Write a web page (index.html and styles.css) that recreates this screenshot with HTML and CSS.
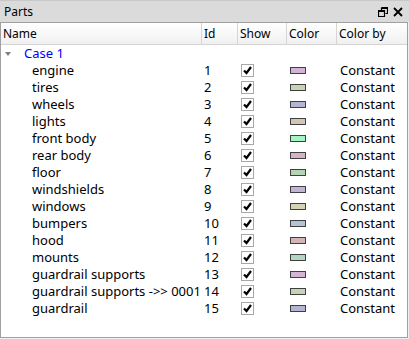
FILE: index.html
```html
<!DOCTYPE html>
<html lang="en">
<head>
    <meta charset="UTF-8">
    <title>Parts</title>
    <link rel="stylesheet" href="styles.css">
</head>
<body>

<div class="panel">
    <div class="titlebar">
        <span class="title">Parts</span>
        <div class="tools">
            <svg width="10" height="10" viewBox="0 0 10 10">
                <path d="M3.5 0.5h6v6h-2M0.5 3.5h6v6h-6z M3.5 0.5v3 M0.5 4.5h6 M3.5 1.5h6" fill="none" stroke="#000" stroke-width="1.2"/>
            </svg>
            <svg width="10" height="10" viewBox="0 0 10 10">
                <path d="M1 1L9 9M9 1L1 9" stroke="#000" stroke-width="1.8"/>
            </svg>
        </div>
    </div>

    <div class="tree">
        <div class="head">
            <div>Name</div>
            <div>Id</div>
            <div>Show</div>
            <div>Color</div>
            <div>Color by</div>
        </div>
        <div class="row case">
            <div class="name"><span class="arrow"></span>Case 1</div>
        </div>
        <div id="rows"></div>
    </div>
</div>

<script>
    const parts = [
        ["engine", "#d4b4d4"],
        ["tires", "#c4d4b4"],
        ["wheels", "#b4b4d4"],
        ["lights", "#d4c4b4"],
        ["front body", "#a4f4c4"],
        ["rear body", "#d4b4c4"],
        ["floor", "#b4d4b4"],
        ["windshields", "#c4b4d4"],
        ["windows", "#d4d4b4"],
        ["bumpers", "#b4c4d4"],
        ["hood", "#d4b4b4"],
        ["mounts", "#b4d4c4"],
        ["guardrail supports", "#d4b4d4"],
        ["guardrail supports ->> 0001", "#c4d4b4"],
        ["guardrail", "#b4b4d4"]
    ];

    const checkSvg = '<svg width="11" height="11" viewBox="0 0 11 11"><path d="M2 5.5L4.5 8L9 2" fill="none" stroke="#000" stroke-width="2.2"/></svg>';

    const container = document.getElementById('rows');
    parts.forEach((p, i) => {
        const row = document.createElement('div');
        row.className = 'row';
        row.innerHTML =
            '<div class="name item"></div>' +
            '<div class="id">' + (i + 1) + '</div>' +
            '<div class="show"><span class="check">' + checkSvg + '</span></div>' +
            '<div class="color"><span class="swatch" style="background:' + p[1] + '"></span></div>' +
            '<div class="by">Constant</div>';
        row.querySelector('.name').textContent = p[0];
        container.appendChild(row);
    });
</script>

</body>
</html>
```

FILE: styles.css
```css
body {
    margin: 0;
    background-color: #FFFFFF;
    font-family: "Noto Sans", Arial, sans-serif;
    font-size: 13px;
    color: #000000;
}

.panel {
    width: 409px;
    height: 339px;
    display: flex;
    flex-direction: column;
    box-sizing: border-box;
    background-color: #F0F0F0;
}

.titlebar {
    height: 22px;
    background-color: #DBDBDB;
    border-top: 1px solid #C8C8C8;
    box-sizing: border-box;
    display: flex;
    align-items: center;
    justify-content: space-between;
    padding: 0 6px 0 4px;
    font-size: 12px;
}

.title {
    line-height: 20px;
}

.tools {
    display: flex;
    gap: 5px;
    align-items: center;
}

.tools svg {
    display: block;
}

.tree {
    flex: 1;
    background-color: #FFFFFF;
    border: 1px solid #A0A0A0;
    margin: 0 1px 1px 0;
    display: flex;
    flex-direction: column;
}

.head, .row {
    display: grid;
    grid-template-columns: 201px 36px 49px 50px 1fr;
}

.head {
    height: 21px;
    background: linear-gradient(#FFFFFF, #F0F0F0);
    border-bottom: 1px solid #D5D5D5;
    font-size: 12px;
}

.head div {
    border-right: 1px solid #D5D5D5;
    padding-left: 2px;
    line-height: 21px;
}

.head div:last-child {
    border-right: none;
}

.row {
    height: 17px;
    line-height: 17px;
    align-items: center;
}

.case .name {
    color: #0000FF;
    grid-column: 1 / 6;
    display: flex;
    align-items: center;
}

.arrow {
    width: 0;
    height: 0;
    border-left: 3px solid transparent;
    border-right: 3px solid transparent;
    border-top: 4px solid #808080;
    margin: 0 13px 0 4px;
}

.item {
    padding-left: 31px;
    white-space: nowrap;
}

.id {
    padding-left: 2px;
}

.show {
    display: flex;
    align-items: center;
    padding-left: 3px;
}

.check {
    width: 13px;
    height: 13px;
    box-sizing: border-box;
    border: 1px solid #A8A8A8;
    display: flex;
    align-items: center;
    justify-content: center;
}

.check svg {
    display: block;
}

.color {
    display: flex;
    align-items: center;
    padding-left: 3px;
}

.swatch {
    width: 16px;
    height: 7px;
    box-sizing: border-box;
    border: 1px solid #404040;
}

.by {
    padding-left: 3px;
}
```
